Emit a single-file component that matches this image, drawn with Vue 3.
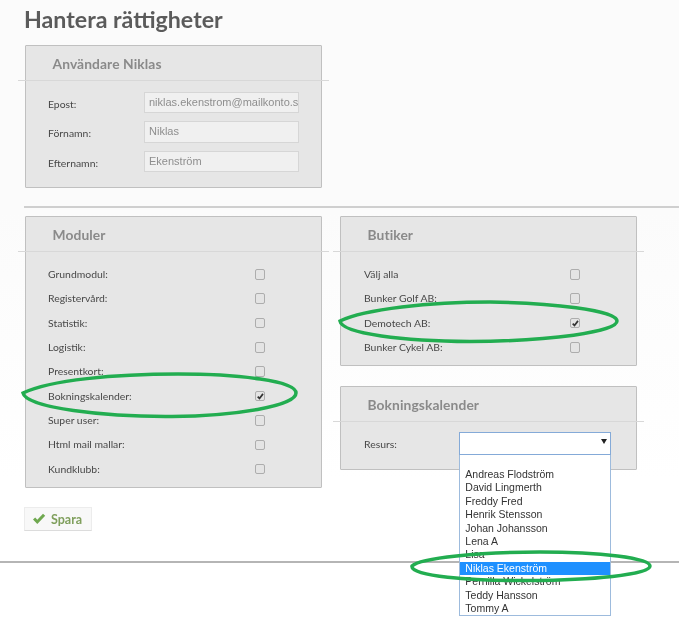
<script setup>
const userFields = [
  { label: 'Epost:', value: 'niklas.ekenstrom@mailkonto.se' },
  { label: 'Förnamn:', value: 'Niklas' },
  { label: 'Efternamn:', value: 'Ekenström' }
]
const modules = [
  { label: 'Grundmodul:' }, { label: 'Registervård:' }, { label: 'Statistik:' },
  { label: 'Logistik:' }, { label: 'Presentkort:' },
  { label: 'Bokningskalender:', checked: true },
  { label: 'Super user:' }, { label: 'Html mail mallar:' }, { label: 'Kundklubb:' }
]
const shops = [
  { label: 'Välj alla' }, { label: 'Bunker Golf AB:' },
  { label: 'Demotech AB:', checked: true }, { label: 'Bunker Cykel AB:' }
]
const resources = [
  '', 'Andreas Flodström', 'David Lingmerth', 'Freddy Fred', 'Henrik Stensson',
  'Johan Johansson', 'Lena A', 'Lisa', 'Niklas Ekenström', 'Pernilla Wickelström',
  'Teddy Hansson', 'Tommy A'
]
</script>

<template>
  <div class="screen">
    <main class="page">
      <h1 class="title">Hantera rättigheter</h1>

      <section class="panel user-panel">
        <h2 class="panel-head">Användare Niklas</h2>
        <div class="user-body">
          <div v-for="f in userFields" :key="f.label" class="user-row">
            <span class="label">{{ f.label }}</span>
            <span class="input">{{ f.value }}</span>
          </div>
        </div>
      </section>

      <hr class="rule" />

      <div class="columns">
        <section class="panel">
          <h2 class="panel-head">Moduler</h2>
          <div class="check-body">
            <div v-for="m in modules" :key="m.label" class="check-row">
              <span class="label">{{ m.label }}</span>
              <span class="box">
                <svg v-if="m.checked" viewBox="0 0 10 10" class="tick"><path d="M2 5.4 L4.1 7.6 L8.2 2.2" /></svg>
              </span>
            </div>
          </div>
        </section>

        <div class="right">
          <section class="panel">
            <h2 class="panel-head">Butiker</h2>
            <div class="check-body shop-body">
              <div v-for="s in shops" :key="s.label" class="check-row">
                <span class="label">{{ s.label }}</span>
                <span class="box">
                  <svg v-if="s.checked" viewBox="0 0 10 10" class="tick"><path d="M2 5.4 L4.1 7.6 L8.2 2.2" /></svg>
                </span>
              </div>
            </div>
          </section>

          <section class="panel">
            <h2 class="panel-head">Bokningskalender</h2>
            <div class="res-body">
              <span class="label res-label">Resurs:</span>
              <div class="select">
                <span class="arrow"></span>
                <ul class="dropdown">
                  <li v-for="r in resources" :key="r" :class="{ active: r === 'Niklas Ekenström' }">{{ r || '\u00a0' }}</li>
                </ul>
              </div>
            </div>
          </section>
        </div>
      </div>

      <button class="save" type="button">
        <svg viewBox="0 0 14 12" class="save-icon"><path d="M1 6.5 L3.2 4.6 L5.3 6.8 L11 .8 L13.2 2.8 L5.3 11 Z" /></svg>
        Spara
      </button>
      <hr class="rule bottom" />
    </main>

    <svg class="marks" viewBox="0 0 686 626">
      <path d="M23 393 C50 380 115 374 178 374 C240 374 296 381 296 393 C296 406 235 416 172 416.500 C105 417 26 408 23 393 Z" />
      <path d="M340 321 C365 309 430 302 490 302 C550 303 617 310 617 321 C617 332 550 341 470 341.500 C405 341 342 334 340 321 Z" />
      <path d="M412 566 C420 558 480 552 540 552 C600 552 650 558 650 566 C650 575 590 580 530 580.500 C470 581 410 576 412 566 Z" />
    </svg>
  </div>
</template>

<style scoped>
.screen {
  position: relative;
  width: 686px;
  height: 626px;
  overflow: hidden;
  background: #fff;
  font-family: Lato, "Liberation Sans", sans-serif;
}
.page {
  width: 679px;
  box-sizing: border-box;
  padding-top: 6px;
  background: linear-gradient(#fbfbfb, #fbfbfb 210px, #fff 480px);
  filter: blur(0.55px);
}
.title {
  margin: 0 0 0 24px;
  height: 39px;
  font-size: 23.200px;
  line-height: 27px;
  font-weight: 700;
  color: #5b5b5b;
}
.panel {
  box-sizing: border-box;
  width: 297px;
  background: #e6e6e6;
  border: 1.500px solid #c0c0c0;
  border-radius: 1px;
}
.user-panel {
  margin-left: 25px;
  height: 143px;
}
.panel-head {
  box-sizing: border-box;
  height: 35px;
  margin: 0 -8px;
  padding: 10px 0 0 34.500px;
  border-bottom: 1px solid #d8d8d8;
  font-size: 13.800px;
  line-height: 16px;
  font-weight: 700;
  color: #8a8a8a;
  letter-spacing: 0.1px;
}
.user-body {
  padding: 11px 22px 0 22px;
  display: flex;
  flex-direction: column;
  gap: 8.500px;
}
.user-row {
  display: flex;
  align-items: center;
  height: 21px;
}
.label {
  font-size: 10.400px;
  line-height: 13px;
  color: #484848;
}
.user-row .label {
  width: 96px;
  padding-top: 3px;
}
.input {
  box-sizing: border-box;
  width: 155px;
  height: 21.500px;
  padding: 0 3px 0 4px;
  background: #f0f0f0;
  border: 1px solid #d6d6d6;
  font-family: "Liberation Sans", Arial, sans-serif;
  font-size: 11px;
  line-height: 18px;
  color: #8e8e8e;
  white-space: nowrap;
  overflow: hidden;
}
.rule {
  height: 2px;
  margin: 18px 0 8px 24px;
  border: 0;
  background: #cfcfcf;
}
.columns {
  display: grid;
  grid-template-columns: 297px 297px;
  column-gap: 18px;
  margin-left: 25px;
  align-items: start;
}
.right {
  display: flex;
  flex-direction: column;
  gap: 19.500px;
}
.check-body {
  padding: 10.200px 0 5.800px 22px;
}
.shop-body {
  padding-left: 23px;
}
.check-row {
  display: flex;
  align-items: center;
  justify-content: space-between;
  height: 24.350px;
  padding-right: 56px;
}
.box {
  box-sizing: border-box;
  width: 10.500px;
  height: 10.500px;
  display: block;
  background: #e4e4e4;
  border: 1.300px solid #adadad;
  border-radius: 2px;
}
.tick {
  display: block;
  width: 100%;
  height: 100%;
}
.tick path {
  fill: none;
  stroke: #333;
  stroke-width: 2;
}
.res-body {
  box-sizing: border-box;
  display: flex;
  align-items: flex-start;
  height: 47px;
  padding: 10px 0 0 23px;
}
.res-label {
  width: 95px;
  padding-top: 6px;
}
.select {
  position: relative;
  box-sizing: border-box;
  width: 152px;
  height: 23px;
  background: #fff;
  border: 1.200px solid #84aad8;
}
.arrow {
  position: absolute;
  right: 3.500px;
  top: 6.500px;
  width: 0;
  height: 0;
  border-left: 3.200px solid transparent;
  border-right: 3.200px solid transparent;
  border-top: 5.500px solid #222;
}
.dropdown {
  position: absolute;
  left: -1.200px;
  top: 21.800px;
  box-sizing: border-box;
  width: 152px;
  height: 161px;
  margin: 0;
  padding: 0;
  list-style: none;
  background: #fff;
  border: 1px solid #9dbbdd;
  border-top: 0;
  z-index: 2;
}
.dropdown li {
  height: 13.400px;
  line-height: 13.400px;
  padding-left: 5.500px;
  font-family: "Liberation Sans", Arial, sans-serif;
  font-size: 10.500px;
  color: #333;
  white-space: nowrap;
}
.dropdown li.active {
  background: #1e90ff;
  color: #fff;
}
.save {
  display: flex;
  align-items: center;
  gap: 5px;
  box-sizing: border-box;
  width: 68px;
  height: 24px;
  margin: 19px 0 0 24px;
  padding: 0 0 0 7px;
  background: #f8f8f8;
  border: 1px solid #ececec;
  border-bottom-color: #dcdcdc;
  font-family: Lato, "Liberation Sans", sans-serif;
  font-size: 12.500px;
  font-weight: 700;
  color: #7f9f5c;
}
.save-icon {
  width: 14px;
  height: 12px;
}
.save-icon path {
  fill: #6fa84f;
}
.rule.bottom {
  margin: 30px 0 0;
  background: #b5b5b5;
}
.marks {
  position: absolute;
  left: 0;
  top: 0;
  width: 686px;
  height: 626px;
  pointer-events: none;
}
.marks path {
  fill: none;
  stroke: #22ad50;
  stroke-width: 3.500;
}
</style>
